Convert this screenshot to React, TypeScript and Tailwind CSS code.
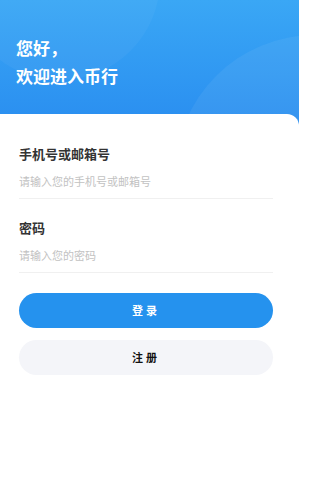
import React from "react";

const font = { fontFamily: '"Noto Sans CJK SC", "Noto Sans", sans-serif' };

const Field = ({ label, placeholder }: { label: string; placeholder: string }) => (
  <div className="border-b border-[#f0f0f0]">
    <div className="text-[13px] leading-[18px] font-bold text-[#333333]">{label}</div>
    <input
      className="w-full h-[35px] text-[11px] text-[#333] placeholder:text-[#c2c2c2] outline-none bg-transparent"
      placeholder={placeholder}
    />
  </div>
);

export default function App() {
  return (
    <div className="w-[299px] h-[500px] bg-white overflow-hidden" style={font}>
      <div className="relative h-[125px] bg-gradient-to-b from-[#3aa7f5] to-[#2a8ef0] overflow-hidden">
        <div className="absolute left-[175px] top-[35px] w-[280px] h-[280px] rounded-full bg-white/[0.06]" />
        <div className="absolute -left-[40px] -top-[120px] w-[200px] h-[200px] rounded-full bg-white/[0.04]" />
        <div className="relative pt-[34px] pl-[16px] text-white text-[17px] font-bold leading-[28px]">
          <div>您好，</div>
          <div>欢迎进入币行</div>
        </div>
      </div>
      <div className="relative -mt-[11px] bg-white rounded-tr-[12px] px-[19px] pt-[31px]">
        <div className="flex flex-col gap-[20px] w-[254px]">
          <Field label="手机号或邮箱号" placeholder="请输入您的手机号或邮箱号" />
          <Field label="密码" placeholder="请输入您的密码" />
        </div>
        <div className="flex flex-col gap-[12px] w-[254px] mt-[20px]">
          <button className="h-[35px] rounded-full bg-[#2592ee] text-white text-[11px] font-bold tracking-[3px]">
            登录
          </button>
          <button className="h-[35px] rounded-full bg-[#f4f5f9] text-[#111] text-[11px] font-bold tracking-[3px]">
            注册
          </button>
        </div>
      </div>
    </div>
  );
}
